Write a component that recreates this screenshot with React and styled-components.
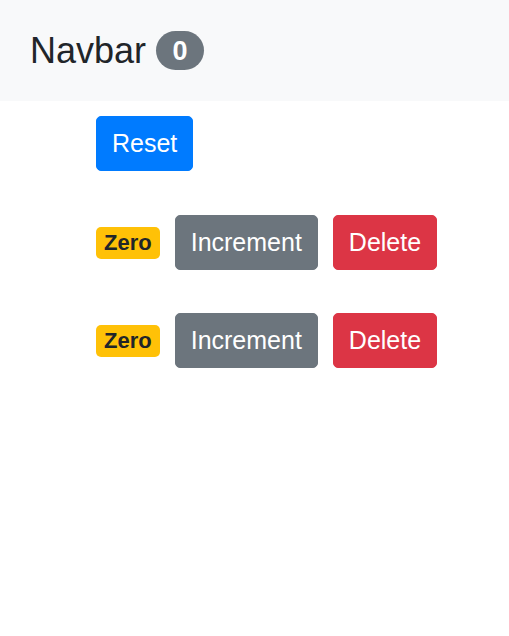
import React, {useState} from 'react';
import styled, {createGlobalStyle} from 'styled-components';

const GlobalStyle = createGlobalStyle`
    body {
        margin: 0;
        background: #ffffff;
        font-family: "Liberation Sans", Arial, sans-serif;
        color: #212529;
    }
`;

const farben = {
    primary: '#007bff',
    secondary: '#6c757d',
    danger: '#dc3545',
};

const Navbar = styled.nav`
    display: flex;
    align-items: center;
    height: 101px;
    padding: 0 30px;
    background-color: #f8f9fa;
`;

const Brand = styled.span`
    display: flex;
    align-items: center;
    font-size: 36px;
    line-height: 40px;
    color: #212529;
`;

const ZaehlerPill = styled.span`
    margin-left: 10px;
    padding: 7px 16.5px 6px;
    font-size: 27px;
    font-weight: 700;
    line-height: 26px;
    color: #ffffff;
    background-color: #6c757d;
    border-radius: 20px;
`;

const Main = styled.main`
    display: flex;
    flex-direction: column;
    align-items: flex-start;
    gap: 44px;
    padding: 15px 0 0 96px;
`;

const Zeile = styled.div`
    display: flex;
    align-items: center;
    gap: 15px;
    & + & {
        margin-top: -1px;
    }
`;

const Knopf = styled.button`
    padding: 8px 15px;
    font-family: inherit;
    font-size: 25px;
    line-height: 37px;
    color: #ffffff;
    background-color: ${(p) => farben[p.$variante]};
    border: 1px solid ${(p) => farben[p.$variante]};
    border-radius: 5px;
    cursor: pointer;
`;

const Marke = styled.span`
    padding: 5px 8px;
    font-size: 22px;
    font-weight: 700;
    line-height: 22px;
    color: #212529;
    background-color: ${(p) => (p.$null ? '#ffc107' : '#007bff')};
    border-radius: 5px;
`;

const App = () => {
    const [zaehler, setZaehler] = useState([
        {id: 1, wert: 0},
        {id: 2, wert: 0},
    ]);

    const erhoehen = (id) => {
        setZaehler(zaehler.map((z) => (z.id === id ? {...z, wert: z.wert + 1} : z)));
    };

    const loeschen = (id) => {
        setZaehler(zaehler.filter((z) => z.id !== id));
    };

    const zuruecksetzen = () => {
        setZaehler(zaehler.map((z) => ({...z, wert: 0})));
    };

    const aktive = zaehler.filter((z) => z.wert > 0).length;

    return (
        <>
            <GlobalStyle/>
            <Navbar>
                <Brand>
                    Navbar
                    <ZaehlerPill>{aktive}</ZaehlerPill>
                </Brand>
            </Navbar>
            <Main>
                <Knopf $variante="primary" onClick={zuruecksetzen}>Reset</Knopf>
                {zaehler.map((z) => (
                    <Zeile key={z.id}>
                        <Marke $null={z.wert === 0}>{z.wert === 0 ? 'Zero' : z.wert}</Marke>
                        <Knopf $variante="secondary" onClick={() => erhoehen(z.id)}>Increment</Knopf>
                        <Knopf $variante="danger" onClick={() => loeschen(z.id)}>Delete</Knopf>
                    </Zeile>
                ))}
            </Main>
        </>
    );
};

export default App;
